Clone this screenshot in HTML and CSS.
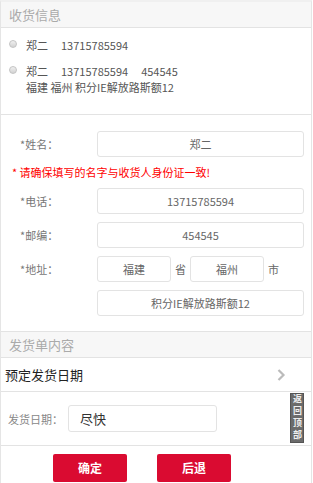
FILE: index.html
```html
<!DOCTYPE html>
<html lang="zh-CN">
<head>
    <meta charset="UTF-8">
    <meta name="viewport" content="width=device-width, initial-scale=1.0">
    <title>收货信息</title>
    <link rel="stylesheet" href="styles.css">
</head>
<body>
    <div class="page">
        <div class="block-title">收货信息</div>
        <div class="address-list">
            <label class="address-item">
                <span class="radio"></span>
                <span class="address-text">郑二<span class="gap"></span>13715785594</span>
            </label>
            <label class="address-item">
                <span class="radio"></span>
                <span class="address-text">郑二<span class="gap"></span>13715785594<span class="gap"></span>454545<br>福建 福州 积分IE解放路斯额12</span>
            </label>
        </div>

        <div class="form">
            <div class="form-row">
                <span class="form-label">*姓名：</span>
                <div class="input wide">郑二</div>
            </div>
            <p class="notice">* 请确保填写的名字与收货人身份证一致!</p>
            <div class="form-row">
                <span class="form-label">*电话：</span>
                <div class="input wide">13715785594</div>
            </div>
            <div class="form-row">
                <span class="form-label">*邮编：</span>
                <div class="input wide">454545</div>
            </div>
            <div class="form-row">
                <span class="form-label">*地址：</span>
                <div class="input small">福建</div>
                <span class="unit">省</span>
                <div class="input small">福州</div>
                <span class="unit">市</span>
            </div>
            <div class="form-row">
                <span class="form-label"></span>
                <div class="input wide">积分IE解放路斯额12</div>
            </div>
        </div>

        <div class="block-title">发货单内容</div>
        <div class="date-head">
            <span>预定发货日期</span>
            <svg class="chevron" width="9" height="12" viewBox="0 0 9 12"><path d="M1.5 1 L6.5 6 L1.5 11" fill="none" stroke="#bbb" stroke-width="2.2"/></svg>
        </div>
        <div class="date-row">
            <span class="date-label">发货日期：</span>
            <div class="date-input">尽快</div>
            <a class="back-top" href="#">返回顶部</a>
        </div>
        <div class="actions">
            <a class="btn" href="#">确定</a>
            <a class="btn" href="#">后退</a>
        </div>
    </div>
</body>
</html>
```

FILE: styles.css
```css
* {
    margin: 0;
    padding: 0;
    box-sizing: border-box;
}

body {
    font-family: "Noto Sans CJK SC", "Noto Sans", sans-serif;
    color: #666;
    background: #fff;
    font-size: 11px;
    line-height: 16px;
}

.page {
    width: 312px;
    border-left: 1px solid #e5e5e5;
    border-right: 1px solid #e5e5e5;
    border-top: 2px solid #f0f0f0;
}

.block-title {
    height: 26px;
    line-height: 25px;
    padding-left: 8px;
    background: #f7f7f7;
    border-bottom: 1px solid #e3e3e3;
    color: #aaa;
    font-size: 13px;
}

.address-list {
    padding: 9px 0 19px;
    border-bottom: 1px solid #e3e3e3;
}

.address-item {
    display: flex;
    align-items: flex-start;
    padding-left: 8px;
    margin-bottom: 10px;
    color: #555;
}

.address-item:last-child {
    margin-bottom: 0;
}

.radio {
    width: 8px;
    height: 8px;
    margin: 3px 9px 0 0;
    border-radius: 50%;
    border: 1px solid #c4c4c4;
    background: linear-gradient(#f0f0f0, #d2d2d2);
}

.gap {
    display: inline-block;
    width: 13px;
}

.form {
    padding: 16px 0 15px;
    border-bottom: 1px solid #e3e3e3;
}

.form-row {
    display: flex;
    align-items: center;
    margin-bottom: 8px;
}

.form-row:last-child {
    margin-bottom: 0;
}

.form-label {
    width: 96px;
    padding-left: 19px;
    color: #777;
}

.input {
    height: 26px;
    line-height: 24px;
    border: 1px solid #e3e3e3;
    border-radius: 3px;
    text-align: center;
}

.wide {
    width: 207px;
}

.small {
    width: 74px;
}

.unit {
    width: 19px;
    text-align: center;
}

.notice {
    color: #f00;
    padding-left: 11px;
    margin: 8px 0;
    line-height: 15px;
}

.date-head {
    display: flex;
    justify-content: space-between;
    align-items: center;
    height: 34px;
    padding: 0 25px 0 4px;
    border-bottom: 1px solid #e3e3e3;
    color: #222;
    font-size: 13px;
}

.date-row {
    position: relative;
    display: flex;
    align-items: center;
    height: 54px;
    padding-left: 7px;
    border-bottom: 1px solid #e3e3e3;
}

.date-label {
    width: 60px;
    color: #888;
}

.date-input {
    width: 149px;
    height: 27px;
    line-height: 25px;
    padding-left: 11px;
    border: 1px solid #e3e3e3;
    border-radius: 3px;
    color: #333;
    font-size: 13px;
}

.back-top {
    position: absolute;
    right: 7px;
    top: 1px;
    width: 14px;
    height: 50px;
    background: #6b6b6b;
    border: 1px solid #555;
    color: #eee;
    font-size: 9px;
    line-height: 12px;
    text-align: center;
    text-decoration: none;
    font-weight: bold;
    writing-mode: vertical-rl;
    letter-spacing: 3px;
    overflow: hidden;
}

.actions {
    display: flex;
    gap: 30px;
    padding: 8px 0 2px 52px;
}

.btn {
    display: block;
    width: 74px;
    height: 28px;
    line-height: 28px;
    border-radius: 2px;
    background: #da0b31;
    color: #fff;
    font-size: 12px;
    font-weight: bold;
    text-align: center;
    text-decoration: none;
}
```
